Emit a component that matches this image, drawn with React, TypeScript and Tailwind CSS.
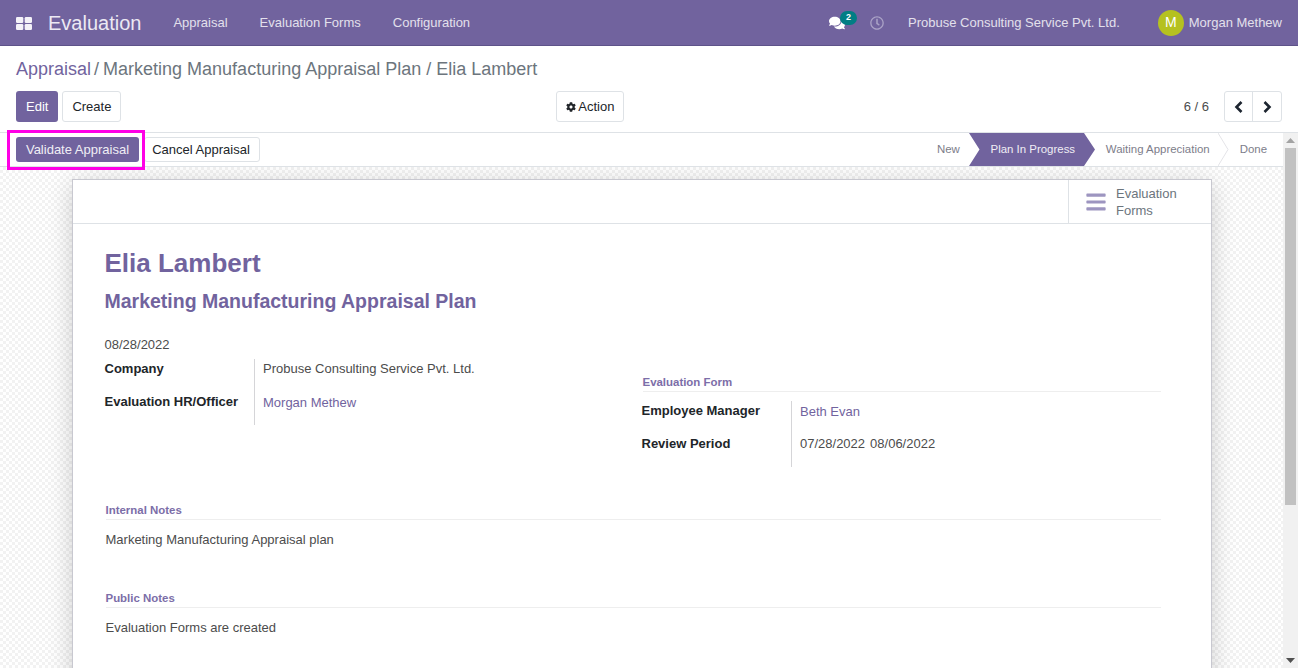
import { FaBars, FaCog, FaComments, FaRegClock } from 'react-icons/fa';

const navItems = ['Appraisal', 'Evaluation Forms', 'Configuration'];

function Field({ label, value, link, labelClass }: { label: string; value: React.ReactNode; link?: boolean; labelClass: string }) {
  return (
    <div className="flex">
      <div className={`font-bold text-[#212529] ${labelClass}`}>{label}</div>
      <div className={`pl-2 border-l border-[#d5d5d8] ${link ? 'text-[#71639e]' : 'text-[#4c4c4c]'}`}>{value}</div>
    </div>
  );
}

function Separator({ title }: { title: string }) {
  return (
    <div className="border-b border-[#eeeeee] text-[11.44px] leading-[15px] pb-[1px] font-bold text-[#7c6ea8]">{title}</div>
  );
}

export default function App() {
  return (
    <div className="h-[668px] overflow-hidden flex flex-col bg-white text-[13px] text-[#4c4c4c] font-['Liberation_Sans',Arial,sans-serif]">
      {/* Navbar */}
      <header className="h-[46px] shrink-0 bg-[#71639e] border-b border-[#5e5389] flex items-center text-white">
        <svg className="ml-4 w-4 h-4" viewBox="0 0 16 16" fill="#f4f2f8">
          <rect x="0" y="2" width="7.3" height="6" rx="1.2" />
          <rect x="8.7" y="2" width="7.3" height="6" rx="1.2" />
          <rect x="0" y="9" width="7.3" height="6" rx="1.2" />
          <rect x="8.7" y="9" width="7.3" height="6" rx="1.2" />
        </svg>
        <span className="ml-4 text-[20px] text-[#ece9f3]">Evaluation</span>
        <nav className="ml-[32px] flex gap-[32px] text-[#e3e0ec]">
          {navItems.map((item) => (
            <span key={item}>{item}</span>
          ))}
        </nav>
        <div className="ml-auto flex items-center text-[#e3e0ec]">
          <div className="relative mr-[13px]">
            <FaComments className="text-white w-4 h-4" />
            <span className="absolute -top-[4px] left-[11px] w-[17px] h-[14px] rounded-full bg-[#017e84] text-white text-[9px] font-bold leading-[13px] text-center">2</span>
          </div>
          <FaRegClock className="ml-[12px] w-[14px] h-[14px] text-[#aaa2c6]" />
          <span className="ml-[24px]">Probuse Consulting Service Pvt. Ltd.</span>
          <span className="ml-[38px] w-[26px] h-[26px] rounded-full bg-[#b5c120] flex items-center justify-center text-[14px] text-white">M</span>
          <span className="ml-[5px] mr-[16px]">Morgan Methew</span>
        </div>
      </header>

      {/* Control panel */}
      <div className="h-[87px] shrink-0 border-b border-[#dee2e6] px-4 pt-[11px]">
        <div className="flex text-[18px] leading-[24px] text-[#6c757d]">
          <span className="text-[#71639e]">Appraisal</span>
          <span className="ml-[3px]">/</span>
          <span className="ml-[4px]">Marketing Manufacturing Appraisal Plan / Elia Lambert</span>
        </div>
        <div className="relative mt-[10px] flex items-center">
          <button className="h-[31px] px-[10px] rounded-[3px] bg-[#71639e] text-white">Edit</button>
          <button className="ml-1 h-[31px] w-[59px] rounded-[3px] border border-[#dee2e6] text-[#212529]">Create</button>
          <button className="ml-[435px] h-[31px] w-[68px] flex items-center justify-center gap-[2px] rounded-[3px] border border-[#dee2e6] text-[#212529]">
            <FaCog className="w-[10px] h-[10px]" />
            Action
          </button>
          <span className="ml-auto mr-[15px]">6 / 6</span>
          <div className="flex h-[31px] rounded-[3px] border border-[#dee2e6] text-[#212529]">
            <button className="w-[28px] flex items-center justify-center border-r border-[#dee2e6]">
              <svg width="9" height="12" viewBox="0 0 9 12"><polyline points="7.5,1 2.5,6 7.5,11" fill="none" stroke="#1d2530" strokeWidth="2.6" /></svg>
            </button>
            <button className="w-[28px] flex items-center justify-center">
              <svg width="9" height="12" viewBox="0 0 9 12"><polyline points="1.5,1 6.5,6 1.5,11" fill="none" stroke="#1d2530" strokeWidth="2.6" /></svg>
            </button>
          </div>
        </div>
      </div>

      <div className="flex-1 min-h-0 flex">
        <div className="flex-1 min-w-0 flex flex-col">
          {/* Status bar */}
          <div className="h-[34px] shrink-0 border-b border-[#dee2e6] flex items-center pl-4">
            <div className="relative">
              <button className="h-[25px] w-[123px] rounded-[3px] bg-[#71639e] text-[#f0eef5]">Validate Appraisal</button>
              <div className="absolute -left-[9px] -top-[7px] w-[138px] h-[40px] border-[3px] border-[#ff00e6] pointer-events-none" />
            </div>
            <button className="ml-[5px] h-[25px] w-[116px] pr-[2px] rounded-[3px] border border-[#dee2e6] text-[#212529]">Cancel Appraisal</button>
            <div className="ml-auto flex h-[33px] items-center text-[11.44px] text-[#7d7d8a]">
              <span className="mr-[9px]">New</span>
              <div className="relative w-[126px] h-[33px] flex items-center justify-center text-[#f0eef5]">
                <svg className="absolute inset-0" width="126" height="33" viewBox="0 0 126 33">
                  <polygon points="0,0 115,0 126,16.5 115,33 0,33 10.5,16.5" fill="#71639e" />
                </svg>
                <span className="relative pl-[2px]">Plan In Progress</span>
              </div>
              <span className="ml-[11px]">Waiting Appreciation</span>
              <svg className="ml-[8px]" width="11" height="33" viewBox="0 0 11 33">
                <polyline points="0,0 10,16.5 0,33" fill="none" stroke="#e4e4e8" />
              </svg>
              <span className="ml-[11px] mr-[16px]">Done</span>
            </div>
          </div>

          {/* Sheet area */}
          <div className="flex-1 min-h-0 overflow-hidden pt-[12px] bg-[repeating-conic-gradient(#f2f2f2_0_25%,#ffffff_0_50%)] bg-[length:6px_6px]">
            <div className="ml-[72px] w-[1140px] h-[600px] bg-white border border-[#c8c8d0] shadow-[0_5px_24px_-1px_rgba(0,0,0,0.2)]">
              <div className="h-[44px] border-b border-[#dee2e6] flex justify-end">
                <div className="w-[143px] border-l border-[#dee2e6] flex items-center pl-[17px]">
                  <FaBars className="w-[20px] h-[22px] text-[#9d95c0]" />
                  <span className="ml-[10px] leading-[17px] text-[#6c757d]">Evaluation<br />Forms</span>
                </div>
              </div>

              <div className="pl-[31.5px] pr-[50px]">
                <h1 className="mt-[22px] text-[26px] leading-[34px] font-bold text-[#71639e]">Elia Lambert</h1>
                <h2 className="mt-[8px] text-[19.5px] leading-[26px] font-bold text-[#71639e]">Marketing Manufacturing Appraisal Plan</h2>
                <div className="mt-[23px] leading-[15px]">08/28/2022</div>

                <div className="flex">
                  <div className="w-[537px] mt-[7px] leading-[15px]">
                    <Field
                      labelClass="w-[149.5px] pt-[2px]"
                      label="Company"
                      value={<div className="h-[34px] pt-[2px]">Probuse Consulting Service Pvt. Ltd.</div>}
                    />
                    <Field
                      labelClass="w-[149.5px] pt-[1px]"
                      label="Evaluation HR/Officer"
                      link
                      value={<div className="h-[32px] pt-[2px]">Morgan Methew</div>}
                    />
                  </div>
                  <div className="flex-1 mt-[23px] leading-[15px]">
                    <div className="ml-[1px]"><Separator title="Evaluation Form" /></div>
                    <div className="mt-[9px]">
                      <Field
                        labelClass="w-[149.5px] pt-[2px]"
                        label="Employee Manager"
                        link
                        value={<div className="h-[33px] pt-[3px]">Beth Evan</div>}
                      />
                      <Field
                        labelClass="w-[149.5px] pt-[2px]"
                        label="Review Period"
                        value={<div className="h-[33px] pt-[2px] flex gap-[5px]"><span>07/28/2022</span><span>08/06/2022</span></div>}
                      />
                    </div>
                  </div>
                </div>

                <div className="ml-[1px] mt-[36px]"><Separator title="Internal Notes" /></div>
                <div className="ml-[1px] mt-[12px] leading-[15px]">Marketing Manufacturing Appraisal plan</div>
                <div className="ml-[1px] mt-[44px]"><Separator title="Public Notes" /></div>
                <div className="ml-[1px] mt-[12px] leading-[15px]">Evaluation Forms are created</div>
              </div>
            </div>
          </div>
        </div>

        {/* Scrollbar */}
        <div className="w-[15px] shrink-0 bg-[#f1f1f1] flex flex-col items-center">
          <svg className="mt-[5px] shrink-0" width="9" height="5" viewBox="0 0 9 5"><polygon points="4.5,0 9,5 0,5" fill="#a3a3a3" /></svg>
          <div className="mt-[5px] w-[11px] h-[357px] bg-[#c1c1c1]" />
          <svg className="mt-auto mb-[5px] shrink-0" width="9" height="5" viewBox="0 0 9 5"><polygon points="0,0 9,0 4.5,5" fill="#505050" /></svg>
        </div>
      </div>
    </div>
  );
}
